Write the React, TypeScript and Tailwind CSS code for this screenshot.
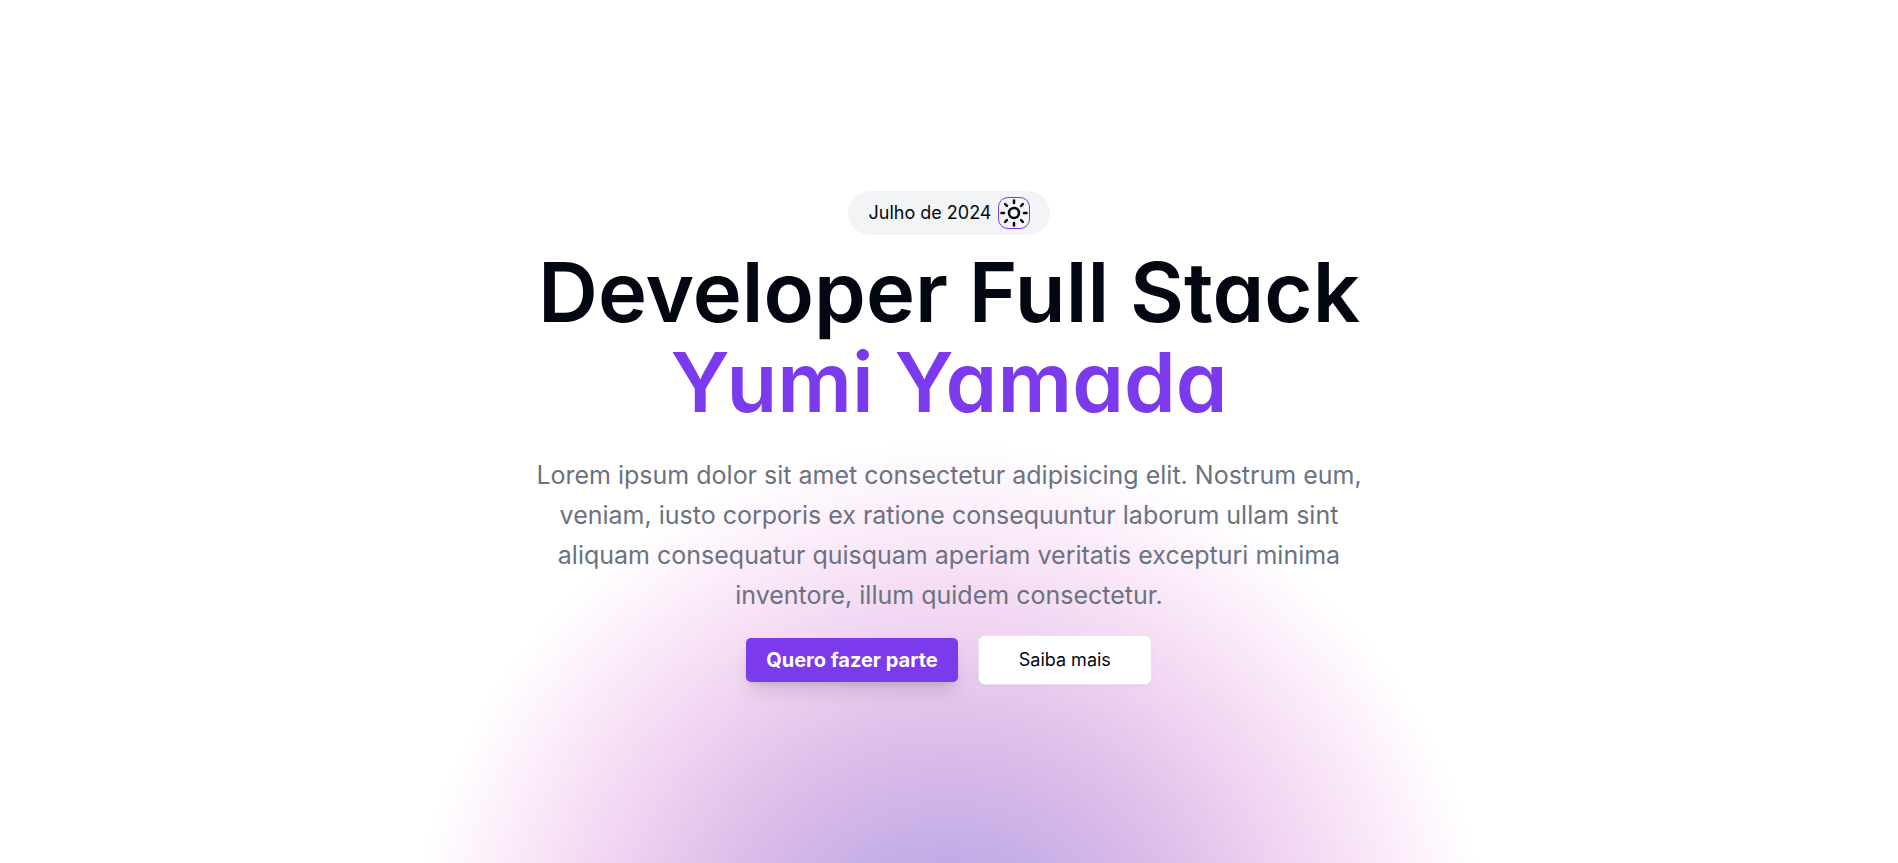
import React from "react";
import { Sun } from "lucide-react";

export default function App() {
  return (
    <main className="flex min-h-screen flex-col items-center justify-center bg-white bg-[radial-gradient(circle_542px_at_50%_calc(100%+121px),#a49be3_0%,#d2b6e8_36%,#e2c1eb_50%,#edd0f0_62%,#f6dff5_75%,#fceefb_87%,#ffffff_100%)] pt-3 font-['Inter',sans-serif] text-[#030712]">
      <div className="flex items-center gap-1.5 rounded-full bg-[#f3f4f6] px-5 py-1.5 text-lg">
        <span>Julho de 2024</span>
        <button
          type="button"
          aria-label="Alternar tema"
          className="flex size-8 items-center justify-center rounded-[10px] border border-[#7c3aed]"
        >
          <Sun className="size-[30px] shrink-0" />
        </button>
      </div>
      <h1 className="mt-3 text-center text-[83px] leading-[90px] font-semibold [font-feature-settings:'cv11']">
        Developer Full Stack
        <span className="block text-[#7c3aed]">Yumi Yamada</span>
      </h1>
      <p className="mt-7 w-full max-w-[850px] text-center text-[25px] leading-10 text-[#6b7280]">
        Lorem ipsum dolor sit amet consectetur adipisicing elit. Nostrum eum, veniam, iusto corporis ex ratione
        consequuntur laborum ullam sint aliquam consequatur quisquam aperiam veritatis excepturi minima inventore,
        illum quidem consectetur.
      </p>
      <div className="mt-5 flex items-center gap-5">
        <button
          type="button"
          className="rounded-[5px] bg-[#7c3aed] px-5 py-2 text-xl leading-7 font-bold text-white shadow-[0_12px_19px_-4px_rgb(0_0_0/0.13),0_5px_8px_-5px_rgb(0_0_0/0.13)]"
        >
          Quero fazer parte
        </button>
        <button
          type="button"
          className="rounded-[7px] border border-[#e5e7eb] bg-white px-10 py-2.5 text-lg leading-7 shadow-xs"
        >
          Saiba mais
        </button>
      </div>
    </main>
  );
}
